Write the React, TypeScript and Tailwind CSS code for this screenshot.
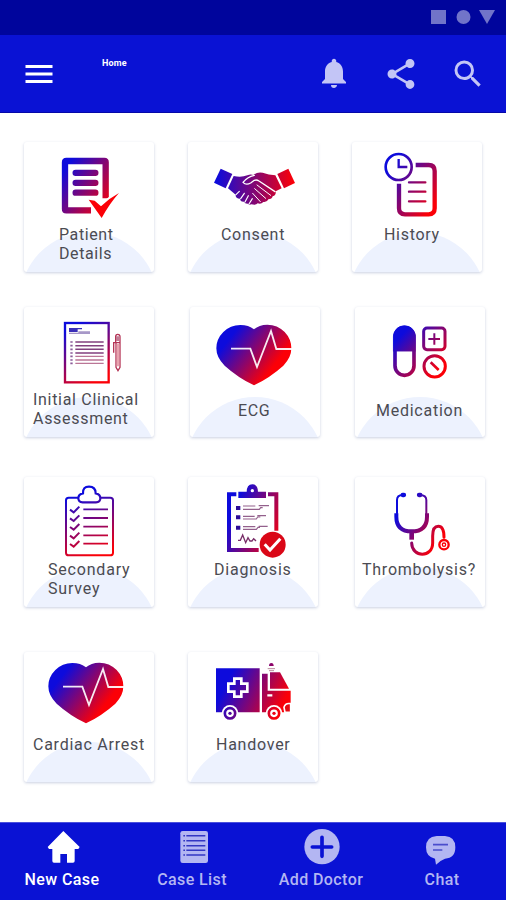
import type { ReactNode } from 'react';
import { MdMenu, MdNotifications, MdSearch, MdShare } from 'react-icons/md';

interface IconProps {
  id: string;
  x: number;
  from: [number, number];
  to: [number, number];
  children: ReactNode;
}

// Three drawing units per pixel, shared by all the card icons
function Icon({ id, x, from, to, children }: IconProps) {
  return (
    <svg viewBox={`${x} 21 390 246`} className="relative block w-[130px] h-[82px] shrink-0" fill="none">
      <defs>
        <linearGradient id={id} gradientUnits="userSpaceOnUse" x1={from[0]} y1={from[1]} x2={to[0]} y2={to[1]}>
          <stop offset="0" stopColor="#0d0bdc" />
          <stop offset="1" stopColor="#fb0007" />
        </linearGradient>
      </defs>
      {children}
    </svg>
  );
}

function PatientIcon() {
  return (
    <Icon id="patient" x={27} from={[145, 110]} to={[285, 210]}>
      <path d="M272 190V82Q272 78 268 78H154Q150 78 150 82V222Q150 226 154 226H228" stroke="url(#patient)" strokeWidth="19" />
      <path d="M182 113.500H241M182 143.500H241M182 173H241" stroke="url(#patient)" strokeWidth="19" strokeLinecap="round" />
      <path d="M221 194L239 197L258 214Q282 190 312 174Q284 205 260 249Z" fill="#fb0007" stroke="#fff" strokeWidth="12" paintOrder="stroke" />
    </Icon>
  );
}

function ConsentIcon() {
  return (
    <Icon id="consent" x={24} from={[110, 140]} to={[340, 140]}>
      <g fill="url(#consent)">
        <path d="M122 101L157 117L137 160L102 143Z" />
        <path d="M325 101L345 144L312 160L292 117Z" />
        <path d="M161 123Q184 128 202 121Q212 116 220 120Q231 110 248 113Q266 120 286 121L305 160L287 169Q289 180 278 184Q276 193 265 193Q261 203 250 201Q243 209 233 205Q228 212 214 208Q208 211 204 206Q195 207 192 200Q181 201 180 191Q166 190 167 179L144 160Z" />
      </g>
      <g stroke="#fff" strokeLinecap="round" strokeLinejoin="round">
        <path d="M223 121Q201 126 189 142Q198 152 212 144L223 136Q230 133 237 138L285 170" strokeWidth="4" />
        <path d="M231 150L272 181M224 161L257 190M218 175L241 200" strokeWidth="3" />
        <path d="M168 179L178 169M182 191L193 175M195 201L205 182M207 207L217 191" strokeWidth="3.500" />
      </g>
    </Icon>
  );
}

function HistoryIcon() {
  return (
    <Icon id="history" x={21} from={[140, 90]} to={[280, 190]}>
      <g stroke="url(#history)">
        <circle cx="161" cy="96" r="39" strokeWidth="8" />
        <path d="M161 72V96H187" strokeWidth="7" />
        <path d="M212 90H251Q269 90 269 108V220Q269 238 251 238H180Q162 238 162 220V146" strokeWidth="13" />
        <path d="M192 142H241M192 170H241M192 199H241" strokeWidth="7" strokeLinecap="round" />
      </g>
    </Icon>
  );
}

function AssessmentIcon() {
  return (
    <Icon id="assessment" x={27} from={[160, 90]} to={[250, 240]}>
      <rect x="150" y="69" width="131" height="178" stroke="url(#assessment)" strokeWidth="7" />
      <path d="M162 84H201V88H188V96H162Z" fill="#3a2fb8" />
      <path d="M190 96H225M162 100H225" stroke="#a798c8" strokeWidth="4" />
      <path d="M181 126H266M181 137H266M181 148H266M181 159H266" stroke="#82407f" strokeWidth="4.500" />
      <path d="M181 169H266M181 180H266M181 190H266" stroke="#bb7696" strokeWidth="4" />
      <path d="M166 126H173M166 137H173M166 148H173M166 159H173M166 169H173M166 180H173M166 190H173" stroke="#8b5b99" strokeWidth="5" />
      <path d="M302 110Q302 103 308 103Q315 103 315 110V202L309 212L303 202V174M302 110V128H315M303 174V128H296V158" stroke="#b53557" strokeWidth="4" />
      <path d="M309 132V199" stroke="#e8a3af" strokeWidth="7" />
      <path d="M303 109H315V123H303Z" fill="#c27b94" />
    </Icon>
  );
}

function HeartIcon({ id }: { id: string }) {
  return (
    <Icon id={id} x={27} from={[145, 120]} to={[268, 215]}>
      <path d="M222 88Q237 74 262 74Q292 74 314 96Q334 117 334 145Q334 173 310 197Q270 233 222 256Q174 233 134 197Q109 173 109 145Q109 117 130 96Q151 75 181 75Q206 75 222 88Z" fill={`url(#${id})`} />
      <path d="M153 146H211L231 201L273 93L289 147H336" stroke="#fff" strokeOpacity=".92" strokeWidth="5.500" />
    </Icon>
  );
}

function MedicationIcon() {
  return (
    <Icon id="medication" x={30} from={[165, 110]} to={[275, 215]}>
      <g stroke="url(#medication)">
        <rect x="150" y="82" width="57" height="144" rx="28.500" strokeWidth="11" />
        <path d="M145 154V110A33 33 0 0 1 211 110V154Z" fill="url(#medication)" strokeWidth="1" />
        <rect x="236" y="84" width="64" height="65" rx="10" strokeWidth="9" />
        <path d="M268 100V134M250 117H285" strokeWidth="6" />
        <circle cx="269" cy="199" r="32" strokeWidth="9" />
        <path d="M257 187L281 210" strokeWidth="8" />
      </g>
    </Icon>
  );
}

function SurveyIcon() {
  return (
    <Icon id="survey" x={27} from={[190, 75]} to={[255, 250]}>
      <g stroke="url(#survey)">
        <path d="M190 83H161Q153 83 153 91V248Q153 256 161 256H286Q294 256 294 248V91Q294 83 286 83H256" strokeWidth="6" />
        <path d="M203 97Q190 97 190 85Q190 72 204 70Q203 50 222 50Q242 50 242 70Q256 72 256 85Q256 97 243 97Z" strokeWidth="6.500" />
        <path d="M205 118H279M205 144H279M205 170H279M205 196H279M205 221H279" strokeWidth="5.500" />
        <path d="M165 119L176 127L193 110M165 145L176 153L193 136M165 171L176 179L193 162M165 197L176 205L193 188M165 222L176 230L193 213" strokeWidth="6" />
      </g>
    </Icon>
  );
}

function DiagnosisIcon() {
  return (
    <Icon id="diagnosis" x={24} from={[155, 130]} to={[305, 195]}>
      <path d="M169 73H147V240H236M264 73H289V182" stroke="url(#diagnosis)" strokeWidth="12" />
      <path d="M177 82V67H202Q202 45 217 45Q232 45 232 67H256V82Z" fill="url(#diagnosis)" stroke="url(#diagnosis)" strokeWidth="4" />
      <circle cx="217" cy="62" r="5" fill="#fff" />
      <path d="M168 108H181V120H168ZM168 136H181V148H168ZM168 167H181V179H168Z" fill="#2c0c98" />
      <path d="M189 108H226M236 107H267M189 118H238L242 113H248M189 139H224M232 137H258M189 147H229L233 141H241M189 170H226M236 169H263M189 178H229L234 172H240" stroke="#93608c" strokeWidth="3.500" />
      <path d="M174 211H181L188 195L197 218L204 203L210 213H216L221 206L228 213" stroke="#782e68" strokeWidth="4" />
      <circle cx="278" cy="224" r="39" fill="#da0717" />
      <path d="M254 223L270 240L301 206" stroke="#fff" strokeWidth="9" />
    </Icon>
  );
}

function StethoscopeIcon() {
  return (
    <Icon id="stetho" x={30} from={[170, 120]} to={[290, 200]}>
      <g stroke="url(#stetho)" strokeLinecap="round">
        <path d="M173 75Q156 75 156 90V130M224 75Q244 75 244 90V130" strokeWidth="6" />
        <path d="M173 75H177M222 75H226" strokeWidth="13" />
        <path d="M154 130V140Q154 184 200 184Q246 184 246 140V130" strokeWidth="12" strokeLinecap="butt" />
        <path d="M200 184V209" strokeWidth="14" strokeLinecap="butt" />
        <path d="M200 219C201 264 263 264 263 219V198Q263 169 280 169Q297 169 297 202" strokeWidth="9" />
        <circle cx="297" cy="224" r="14" strokeWidth="7" />
        <circle cx="297" cy="224" r="5" strokeWidth="4" />
      </g>
    </Icon>
  );
}

function AmbulanceIcon() {
  return (
    <Icon id="ambulance" x={27} from={[145, 110]} to={[305, 190]}>
      <g fill="url(#ambulance)">
        <path d="M111 70H242V202H111Z" />
        <path d="M249 86H266V137H335V178Q335 202 317 202H249Z" />
        <path d="M273 82H303L330 131H273Z" />
        <path d="M270 63Q270 54 277 54Q284 54 284 63Z" />
      </g>
      <path d="M266 71H288M270 77H285" stroke="#b98b9c" strokeWidth="3" />
      <path d="M166 101H187V116H205V140H187V155H166V140H148V116H166Z" stroke="#fff" strokeWidth="8" />
      <path d="M265 151H280" stroke="#fff" strokeWidth="7" />
      <path d="M335 176Q319 173 315 187L318 202H335Z" fill="#e40b15" stroke="#fff" strokeWidth="5" />
      {[153, 285].map(cx => (
        <g key={cx}>
          <circle cx={cx} cy="205" r="25" fill="#fff" />
          <circle cx={cx} cy="205" r="15.500" stroke="url(#ambulance)" strokeWidth="8" />
          <circle cx={cx} cy="205" r="5" fill="url(#ambulance)" />
        </g>
      ))}
    </Icon>
  );
}

interface CardProps {
  icon: ReactNode;
  label: ReactNode;
  labelClass: string;
  className?: string;
}

function Card({ icon, label, labelClass, className = '' }: CardProps) {
  return (
    <button className={`relative flex flex-col items-start w-[130px] h-[130px] shrink-0 rounded-[3px] bg-white overflow-hidden text-left shadow-[0_1px_3px_rgba(70,90,150,0.28)] ${className}`}>
      <span className="absolute -left-1 top-[90px] size-[138px] rounded-full bg-[#edf2fe]" />
      {icon}
      <span className={`relative whitespace-nowrap text-base leading-[18.5px] text-[#4b4b52] ${labelClass}`}>{label}</span>
    </button>
  );
}

const NAV = [
  {
    label: 'New Case',
    className: 'w-[124px] text-white',
    viewBox: '126 21 120 138',
    art: <path d="M190 45L239 93L235 99H224V135Q224 140 219 140H201V114H181V140H162Q157 140 157 135V99H147L143 93Z" fill="currentColor" />,
  },
  {
    label: 'Case List',
    className: 'w-[136px] text-[#b3b6f2]',
    viewBox: '516 21 120 138',
    art: (
      <>
        <rect x="541" y="45" width="83" height="96" rx="7" fill="currentColor" />
        <path d="M559 59H616M559 74H616M559 89H616M559 103H616M559 117H616" stroke="#3236c3" strokeWidth="4.500" />
        <path d="M550 59H555M550 74H555M550 89H555M550 103H555M550 117H555" stroke="#3236c3" strokeWidth="4.500" />
      </>
    ),
  },
  {
    label: 'Add Doctor',
    className: 'w-[122px] text-[#b3b6f2]',
    viewBox: '903 21 120 138',
    art: (
      <>
        <circle cx="966" cy="92" r="53" fill="currentColor" />
        <path d="M966 64V121M937 93H995" stroke="#0a12d4" strokeWidth="11" strokeLinecap="round" />
      </>
    ),
  },
  {
    label: 'Chat',
    className: 'w-[120px] text-[#b3b6f2]',
    viewBox: '1266 21 120 138',
    art: (
      <>
        <path d="M1310 60H1335Q1366 62 1366 94Q1366 127 1335 128Q1319 134 1308 146L1305 128Q1278 123 1278 94Q1278 62 1310 60Z" fill="currentColor" />
        <path d="M1299 86H1344M1299 102H1327" stroke="#4a4dcc" strokeWidth="5" />
      </>
    ),
  },
];

export default function App() {
  return (
    <div className="flex flex-col w-[506px] h-[900px] bg-white overflow-hidden font-[Roboto,sans-serif]">
      <div className="flex items-center justify-end h-[35px] pr-[11px] bg-[#00059c] shrink-0">
        <svg viewBox="0 0 64 14" className="w-16 h-3.5 mb-px" fill="#7174c9">
          <rect width="15" height="14" />
          <circle cx="32.500" cy="7" r="7" />
          <path d="M48 0H64L56 14Z" />
        </svg>
      </div>

      <header className="flex items-center h-[78px] pl-[21px] pr-[20px] bg-[#0a12d4] border-b border-[#0509a8] shrink-0 text-[#c3c5f6]">
        <MdMenu className="size-9 text-white" />
        <h1 className="ml-[45px] mb-[21px] text-[9px] leading-3 font-bold tracking-[0.15px] text-white">Home</h1>
        <div className="flex items-center gap-[31px] ml-auto">
          <MdNotifications className="size-9 -mt-0.5" />
          <MdShare className="size-9" />
          <MdSearch className="size-9" />
        </div>
      </header>

      <main className="flex flex-col flex-1 pt-[29px] pl-6">
        <div className="flex gap-[34px]">
          <Card icon={<PatientIcon />} label={<>Patient<br />Details</>} labelClass="ml-[35px] mt-0.5 tracking-[0.6px]" />
          <Card icon={<ConsentIcon />} label="Consent" labelClass="ml-[33px] mt-0.5 tracking-[0.7px]" />
          <Card icon={<HistoryIcon />} label="History" labelClass="ml-[32px] mt-0.5 tracking-[0.7px]" />
        </div>
        <div className="flex gap-[35px] mt-[35px]">
          <Card icon={<AssessmentIcon />} label={<>Initial Clinical<br />Assessment</>} labelClass="ml-[9px] mt-0.5 tracking-[0.7px]" />
          <Card className="ml-px" icon={<div className="-ml-px"><HeartIcon id="ecg" /></div>} label="ECG" labelClass="ml-[48px] mt-[13px] tracking-[0.6px]" />
          <Card icon={<MedicationIcon />} label="Medication" labelClass="ml-[21px] mt-[13px] tracking-[0.75px]" />
        </div>
        <div className="flex gap-[34px] mt-10">
          <Card icon={<SurveyIcon />} label={<>Secondary<br />Survey</>} labelClass="ml-[24px] mt-0.5 tracking-[0.8px]" />
          <Card icon={<DiagnosisIcon />} label="Diagnosis" labelClass="ml-[26px] mt-0.5 tracking-[0.8px]" />
          <Card className="ml-[3px]" icon={<StethoscopeIcon />} label="Thrombolysis?" labelClass="ml-[7px] mt-0.5 tracking-[0.75px]" />
        </div>
        <div className="flex gap-[34px] mt-[45px]">
          <Card icon={<div className="-mt-[7px] -ml-[3px] mb-[7px]"><HeartIcon id="arrest" /></div>} label="Cardiac Arrest" labelClass="ml-[9px] mt-0.5 tracking-[0.75px]" />
          <Card icon={<AmbulanceIcon />} label="Handover" labelClass="ml-[28px] mt-0.5 tracking-[0.75px]" />
        </div>
      </main>

      <nav className="flex h-[78px] bg-[#0a12d4] border-t border-[#4a50dd] shrink-0">
        {NAV.map(item => (
          <button key={item.label} className={`flex flex-col items-center ${item.className}`}>
            <svg viewBox={item.viewBox} className="w-10 h-[46px]" fill="none">{item.art}</svg>
            <span className="mt-0.5 text-base leading-[18px] font-medium tracking-[0.4px] whitespace-nowrap">{item.label}</span>
          </button>
        ))}
      </nav>
    </div>
  );
}
